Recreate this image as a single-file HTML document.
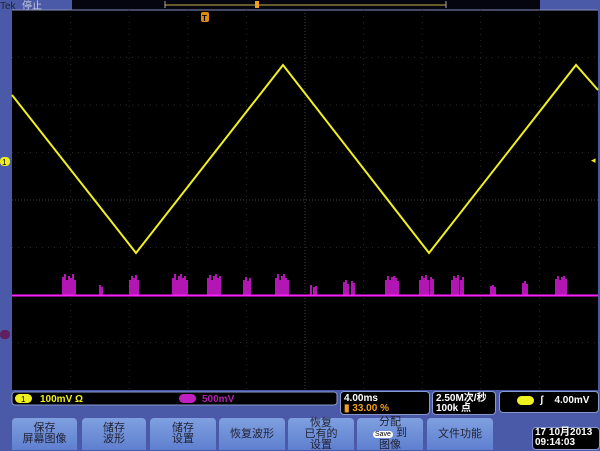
<!DOCTYPE html>
<html><head><meta charset="utf-8"><style>
body{margin:0;width:600px;height:450px;overflow:hidden;background:#4a5aa8;font-family:"Liberation Sans","Noto Sans CJK SC",sans-serif}
svg{position:absolute;left:0;top:0}
.btn{position:absolute;top:418px;height:32px;background:linear-gradient(#7fa0e0,#5f7fcf);border-radius:4px 4px 0 0;color:#223;font-size:11px;line-height:11px;text-align:center;display:flex;align-items:center;justify-content:center;flex-direction:column}
.box{position:absolute;background:#000;border:1px solid #8899cc;border-radius:4px;color:#fff;font-size:10px;font-weight:bold;font-family:"Liberation Sans","Noto Sans CJK SC",sans-serif}
</style></head><body>
<svg width="600" height="450">
<rect x="0" y="0" width="600" height="450" fill="#4a5aa8"/>
<rect x="72" y="0" width="468" height="10" fill="#05050f"/>
<line x1="165" y1="1" x2="165" y2="8" stroke="#aaa"/>
<line x1="446" y1="1" x2="446" y2="8" stroke="#aaa"/>
<line x1="165" y1="5" x2="446" y2="5" stroke="#c8b040"/>
<rect x="255" y="1" width="4" height="7" fill="#f0a020"/>
<text x="0" y="9" font-size="10" fill="#223">Tek</text>
<text x="22" y="9" font-size="10" fill="#ccd">停止</text>
<rect x="12" y="10" width="586" height="380" fill="#000"/>
<line x1="12" y1="10" x2="598" y2="10" stroke="#8890c0"/>
<g stroke="#2a2a2a" stroke-dasharray="1 5">
<line x1="70.6" y1="10" x2="70.6" y2="390"/><line x1="129.2" y1="10" x2="129.2" y2="390"/><line x1="187.8" y1="10" x2="187.8" y2="390"/><line x1="246.4" y1="10" x2="246.4" y2="390"/><line x1="363.6" y1="10" x2="363.6" y2="390"/><line x1="422.2" y1="10" x2="422.2" y2="390"/><line x1="480.8" y1="10" x2="480.8" y2="390"/><line x1="539.4" y1="10" x2="539.4" y2="390"/>
<line x1="12" y1="57.5" x2="598" y2="57.5"/><line x1="12" y1="105" x2="598" y2="105"/><line x1="12" y1="152.5" x2="598" y2="152.5"/><line x1="12" y1="247.5" x2="598" y2="247.5"/><line x1="12" y1="295" x2="598" y2="295"/><line x1="12" y1="342.5" x2="598" y2="342.5"/>
</g>
<g stroke="#444"><line x1="305" y1="10" x2="305" y2="390" stroke-dasharray="1 2"/><line x1="12" y1="200" x2="598" y2="200" stroke-dasharray="1 2"/></g>
<rect x="201" y="12" width="8" height="10" rx="2" fill="#e08a10"/>
<text x="202" y="21" font-size="8" fill="#000" font-weight="bold">T</text>
<g stroke="#ff20ff" stroke-width="1.4">
<line x1="12" y1="295.5" x2="598" y2="295.5" stroke-width="2"/>
<path d="M63 295V277M65 295V274M67 295V280M69 295V276M71 295V278M73 295V274M75 295V280M100 295V285M102 295V287M130 295V280M132 295V276M134 295V278M136 295V275M138 295V280M173 295V278M175 295V274M177 295V280M179 295V276M181 295V274M183 295V278M185 295V276M187 295V280M208 295V278M210 295V275M212 295V280M214 295V276M216 295V274M218 295V278M220 295V276M244 295V280M246 295V277M248 295V281M250 295V278M276 295V278M278 295V274M280 295V280M282 295V276M284 295V274M286 295V278M288 295V280M311 295V285M314 295V287M316 295V286M344 295V282M346 295V280M348 295V284M352 295V281M354 295V283M386 295V280M388 295V276M390 295V280M392 295V277M394 295V276M396 295V278M398 295V281M420 295V280M422 295V276M424 295V278M426 295V275M428 295V280M431 295V277M433 295V279M452 295V280M454 295V276M456 295V278M458 295V275M461 295V280M463 295V277M491 295V286M493 295V285M495 295V287M523 295V283M525 295V281M527 295V284M556 295V279M558 295V276M560 295V280M562 295V277M564 295V276M566 295V279"/>
</g>
<polyline points="12,95 136,253 283,65 429,253 576,65 598,90" fill="none" stroke="#f0f020" stroke-width="2"/>
<rect x="0" y="157" width="10" height="9" rx="4" fill="#f0f020"/><text x="2" y="165" font-size="8" fill="#000">1</text>
<rect x="0" y="330" width="10" height="9" rx="4" fill="#602060"/>
<text x="591" y="163" font-size="9" fill="#f0f020">◂</text>
<rect x="12" y="392" width="325" height="13" rx="3" fill="#000" stroke="#8899cc"/>
<rect x="15" y="394" width="17" height="9" rx="4.5" fill="#f0f020"/><text x="21" y="402" font-size="8" fill="#000">1</text>
<text x="40" y="402" font-size="10" font-weight="bold" fill="#f0f020">100mV Ω</text>
<rect x="179" y="394" width="17" height="9" rx="4.5" fill="#c020c0"/>
<text x="202" y="402" font-size="10" font-weight="bold" fill="#b020b0">500mV</text>
</svg>
<div class="box" style="left:340px;top:391px;width:88px;height:22px;"><div style="padding:2px 0 0 3px;line-height:10px">4.00ms<br><span style="color:#f0a020">▮ 33.00 %</span></div></div>
<div class="box" style="left:432px;top:391px;width:62px;height:22px;"><div style="padding:2px 0 0 3px;line-height:10px">2.50M次/秒<br>100k 点</div></div>
<div class="box" style="left:499px;top:391px;width:98px;height:20px;"><div style="padding:3px 0 0 18px;line-height:12px"><span style="position:absolute;left:17px;top:4px;width:17px;height:9px;border-radius:5px;background:#f0f020"></span><span style="margin-left:22px">ʃ</span>&nbsp;&nbsp;&nbsp;&nbsp;4.00mV</div></div>
<div class="btn" style="left:12px;width:65px">保存<br>屏幕图像</div>
<div class="btn" style="left:82px;width:64px">储存<br>波形</div>
<div class="btn" style="left:150px;width:66px">储存<br>设置</div>
<div class="btn" style="left:219px;width:66px">恢复波形</div>
<div class="btn" style="left:288px;width:66px">恢复<br>已有的<br>设置</div>
<div class="btn" style="left:357px;width:66px">分配<br><span><span style="background:#fff;color:#000;font-size:7px;border-radius:4px;padding:0 2px">Save</span> 到</span>图像</div>
<div class="btn" style="left:427px;width:66px">文件功能</div>
<div class="box" style="left:532px;top:427px;width:64px;height:21px;font-size:10px;line-height:10px;padding-left:2px">17 10月2013<br>09:14:03</div>
</body></html>
